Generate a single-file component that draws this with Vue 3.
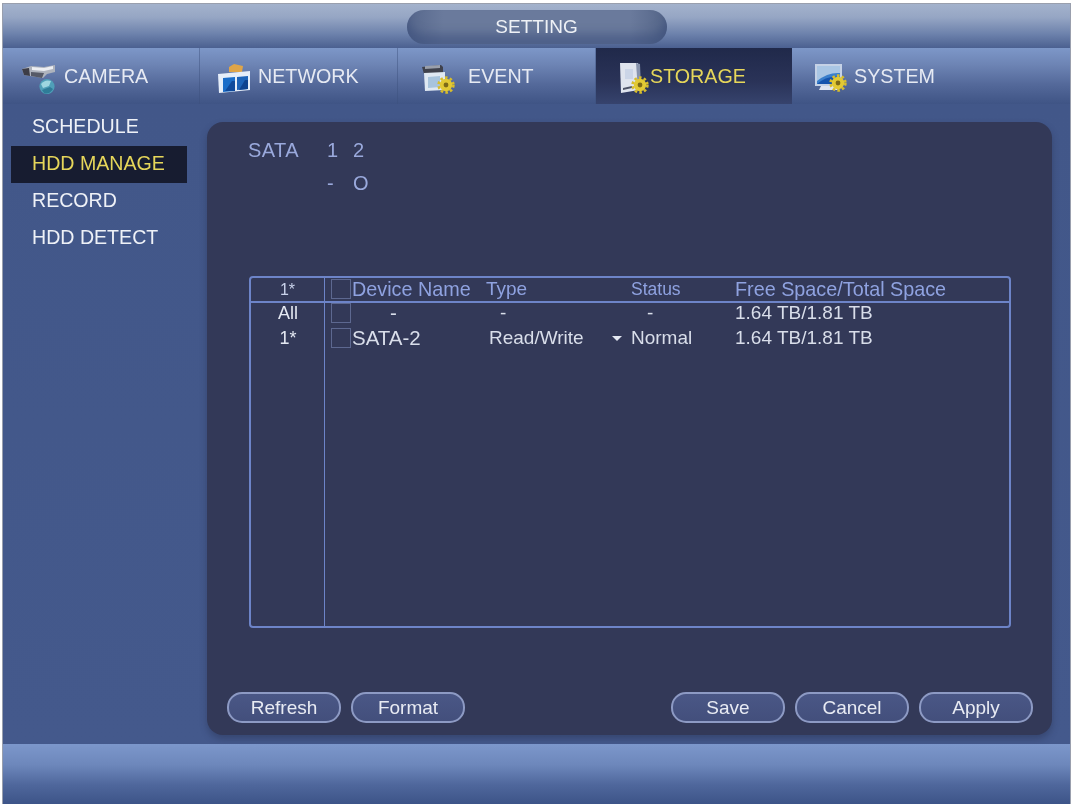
<template>
  <div class="frame">
    <header class="titlebar">
      <div class="title-pill">SETTING</div>
    </header>

    <nav class="tabs">
      <div
        v-for="tab in tabs"
        :key="tab.name"
        class="tab"
        :class="[tab.cls, { active: tab.name === 'STORAGE' }]"
      >
        <svg class="tab-icon" viewBox="0 0 36 36" v-html="tab.icon"></svg>
        <span>{{ tab.name }}</span>
      </div>
    </nav>

    <div class="body">
      <aside class="sidebar">
        <div
          v-for="item in menu"
          :key="item"
          class="menu-item"
          :class="{ current: item === 'HDD MANAGE' }"
        >{{ item }}</div>
      </aside>

      <main class="panel">
        <div class="sata">
          <div class="sata-row">
            <span class="sata-label">SATA</span>
            <span class="sata-port">1</span>
            <span class="sata-port">2</span>
          </div>
          <div class="sata-row second">
            <span class="sata-label"></span>
            <span class="sata-port">-</span>
            <span class="sata-port">O</span>
          </div>
        </div>

        <div class="table">
          <div class="table-head">
            <div class="col-num">1*</div>
            <div class="col-check"><i class="box"></i></div>
            <div class="col-name">Device Name</div>
            <div class="col-type">Type</div>
            <div class="col-status">Status</div>
            <div class="col-space">Free Space/Total Space</div>
          </div>
          <div class="table-body">
            <div v-for="row in rows" :key="row.num" class="table-row">
              <div class="col-num">{{ row.num }}</div>
              <div class="col-check"><i class="box"></i></div>
              <div class="col-name" :class="{ dash: row.name === '-' }">{{ row.name }}</div>
              <div class="col-type" :class="{ dash: row.type === '-' }">{{ row.type }}</div>
              <div class="col-arrow"><i v-if="row.arrow" class="arrow"></i></div>
              <div class="col-status" :class="{ dash: row.status === '-' }">{{ row.status }}</div>
              <div class="col-space">{{ row.space }}</div>
            </div>
          </div>
        </div>

        <div class="buttons">
          <button class="btn">Refresh</button>
          <button class="btn">Format</button>
          <span class="spacer"></span>
          <button class="btn">Save</button>
          <button class="btn">Cancel</button>
          <button class="btn">Apply</button>
        </div>
      </main>
    </div>

    <footer class="bottombar"></footer>
  </div>
</template>

<script setup>
const gear = (x, y) => `
  <g transform="translate(${x} ${y})">
    <circle r="7.4" fill="none" stroke="#d8bd2c" stroke-width="2.6" stroke-dasharray="2.6 2.2"/>
    <circle r="6.2" fill="#e2c934"/>
    <circle r="2.4" fill="#7d6a18"/>
  </g>`

const cameraIcon = `
  <path d="M2 11 L11 8 L24 9 L35 7 L35 14 L27 16 L23 20 L10 18 L4 17 Z" fill="#aeb3bd"/>
  <path d="M2 11 L9 10 L10 18 L4 17 Z" fill="#3d3d47"/>
  <path d="M12 9 L24 10 L33 8 L33 11 L24 13 L12 12 Z" fill="#eceef2"/>
  <path d="M11 14 L24 15 L22 20 L11 18 Z" fill="#565a67"/>
  <circle cx="27" cy="28.5" r="7.6" fill="#4f9fb8"/>
  <path d="M21 26 Q25 21 31 23 L29 28 L23 30 Z" fill="#9ed6e0"/>
  <path d="M22 32 L30 29 L33 31 Q29 37 24 35 Z" fill="#2f7c98"/>`

const networkIcon = `
  <path d="M11 9 L16 6 L25 8 L24 14 L11 14 Z" fill="#dfa548"/>
  <path d="M0 16 L32 13 L32 32 L1 35 Z" fill="#e6eef9"/>
  <path d="M5 20 L17 19 L17 33 L5 34 Z" fill="#1b6dc8"/>
  <path d="M19 19 L30 18 L30 31 L19 32 Z" fill="#1d63b8"/>
  <path d="M7 33 L14 23 L17 23 L17 33 Z" fill="#0f4a9c"/>
  <path d="M21 32 L27 22 L30 22 L30 31 Z" fill="#0e4390"/>`

const eventIcon = `
  <path d="M2 9 L21 7 L23 9 L23 15 L4 16 Z" fill="#3f414c"/>
  <path d="M5 8 L20 7 L20 10 L5 11 Z" fill="#9a9fab"/>
  <path d="M4 15 L25 14 L25 32 L5 33 Z" fill="#dfe8f2"/>
  <path d="M8 19 L20 18 L20 29 L8 30 Z" fill="#a8c4dd"/>
  ${gear(26, 27)}`

const storageIcon = `
  <path d="M2 5 L20 5 L21 32 L3 35 Z" fill="#dfe4ee"/>
  <path d="M18 5 L22 6 L23 30 L20 32 Z" fill="#8793ad"/>
  <rect x="7" y="11" width="8" height="10" fill="#cbd5e7"/>
  <path d="M5 30 L14 28 L14 30 L5 32 Z" fill="#4d5366"/>
  ${gear(22, 27)}`

const systemIcon = `
  <rect x="1" y="6" width="27" height="22" fill="#c5d2e6"/>
  <rect x="3" y="8" width="23" height="18" fill="#3a7fcb"/>
  <path d="M3 8 H26 V15 Q14 14 3 23 Z" fill="#a9c6e4"/>
  <path d="M3 26 Q13 17 26 19 V26 Z" fill="#1554ad"/>
  <path d="M7 28 H21 L24 32 H5 Z" fill="#dfe6f1"/>
  ${gear(24, 25)}`

const tabs = [
  { name: 'CAMERA', cls: 't-camera', icon: cameraIcon },
  { name: 'NETWORK', cls: 't-network', icon: networkIcon },
  { name: 'EVENT', cls: 't-event', icon: eventIcon },
  { name: 'STORAGE', cls: 't-storage', icon: storageIcon },
  { name: 'SYSTEM', cls: 't-system', icon: systemIcon }
]

const menu = ['SCHEDULE', 'HDD MANAGE', 'RECORD', 'HDD DETECT']

const rows = [
  { num: 'All', name: '-', type: '-', status: '-', space: '1.64 TB/1.81 TB' },
  { num: '1*', name: 'SATA-2', type: 'Read/Write', arrow: true, status: 'Normal', space: '1.64 TB/1.81 TB' }
]
</script>

<style scoped>
.frame {
  width: 1067px;
  height: 800px;
  margin: 4px 0 0 3px;
  display: flex;
  flex-direction: column;
  font-family: "Liberation Sans", Arial, sans-serif;
  color: #e4e8f2;
  filter: blur(0.7px);
  box-shadow: 0 0 0 1px rgba(70, 80, 105, 0.55);
}

.titlebar {
  height: 44px;
  flex: none;
  display: flex;
  justify-content: center;
  align-items: center;
  background: linear-gradient(#a3b2cc 0%, #96a6c4 30%, #6d82ac 68%, #4b6090 100%);
}

.title-pill {
  width: 260px;
  height: 34px;
  margin-top: 1px;
  border-radius: 17px;
  background: linear-gradient(90deg, #56678c 0%, #6a7a9c 14%, #6a7a9c 86%, #546588 100%);
  box-shadow: inset 0 -10px 10px rgba(52, 72, 120, 0.5);
  color: #eef1f6;
  font-size: 19px;
  line-height: 34px;
  text-align: center;
}

.tabs {
  height: 56px;
  flex: none;
  display: flex;
  background: linear-gradient(#7d97c8 0%, #6d84b4 30%, #54699a 65%, #3f5485 100%);
}

.tab {
  height: 100%;
  display: flex;
  align-items: center;
  font-size: 19.7px;
  color: #e6eaf3;
  box-sizing: border-box;
  border-right: 1px solid rgba(60, 80, 125, 0.45);
}

.tab-icon {
  flex: none;
  width: 36px;
  height: 36px;
}

.t-camera { width: 197px; padding-left: 17px; gap: 8px; }
.t-network { width: 198px; padding-left: 18px; gap: 4px; }
.t-event { width: 198px; padding-left: 22px; gap: 12px; }
.t-storage { width: 196px; padding-left: 22px; gap: 0; }
.t-storage span { margin-left: -4px; }
.t-system { width: 278px; padding-left: 22px; gap: 4px; border-right: none; }

.tab.active {
  background: linear-gradient(#20294a 0%, #2a3358 60%, #36436d 100%);
  color: #e6d65a;
  border-right: none;
}

.body {
  flex: 1;
  min-height: 0;
  display: flex;
  background: linear-gradient(#425789 0%, #44598c 100%);
}

.sidebar {
  width: 204px;
  flex: none;
  box-sizing: border-box;
  padding: 5px 0 0 8px;
}

.menu-item {
  width: 176px;
  height: 37px;
  line-height: 35px;
  padding-left: 21px;
  box-sizing: border-box;
  font-size: 19.6px;
  color: #eef1f7;
}

.menu-item.current {
  background: #171c30;
  color: #e6d65a;
}

.panel {
  flex: none;
  width: 845px;
  margin: 18px 0 9px;
  box-sizing: border-box;
  padding: 16px 19px 12px 20px;
  display: flex;
  flex-direction: column;
  border-radius: 16px;
  background: #333958;
  box-shadow: 0 4px 7px rgba(35, 42, 72, 0.4);
}

.sata {
  height: 138px;
  padding-left: 21px;
  box-sizing: border-box;
  color: #9aa9dc;
  font-size: 20px;
}

.sata-row {
  display: flex;
  height: 24px;
  line-height: 24px;
}

.sata-row.second {
  margin-top: 9px;
}

.sata-label {
  width: 79px;
  letter-spacing: 0.4px;
}

.sata-port {
  width: 26px;
}

.table {
  width: 762px;
  height: 353px;
  margin-left: 22px;
  box-sizing: border-box;
  border: 2px solid #6d84c8;
  border-radius: 4px;
  display: flex;
  flex-direction: column;
  font-size: 19px;
}

.table-head {
  height: 25px;
  box-sizing: border-box;
  flex: none;
  display: flex;
  align-items: center;
  color: #8fa2e0;
  border-bottom: 2px solid #6d84c8;
}

.table-body {
  flex: 1;
  position: relative;
  display: flex;
  flex-direction: column;
}

.table-body::before {
  content: "";
  position: absolute;
  left: 73px;
  top: 0;
  bottom: 0;
  border-left: 1px solid #6d84c8;
}

.table-row {
  display: flex;
  align-items: center;
  height: 25px;
  box-sizing: border-box;
  padding-bottom: 4px;
  color: #d9deea;
}

.col-num {
  width: 74px;
  flex: none;
  text-align: center;
  color: #e4e8f2;
  font-size: 18px;
}

.table-head .col-num {
  align-self: stretch;
  line-height: 23px;
  box-sizing: border-box;
  border-right: 1px solid #6d84c8;
  font-size: 16px;
  color: #c9d2ea;
}

.col-check {
  width: 27px;
  flex: none;
  padding-left: 6px;
  box-sizing: border-box;
  display: flex;
}

.box {
  width: 20px;
  height: 20px;
  box-sizing: border-box;
  border: 1px solid #5d6890;
}

.col-name {
  flex: none;
  width: 134px;
  font-size: 19.8px;
  white-space: nowrap;
}

.table-row .col-name {
  width: 137px;
  font-size: 20.5px;
}

.col-type {
  flex: none;
  width: 145px;
}

.table-row .col-type {
  width: 123px;
}

.col-arrow {
  width: 19px;
  flex: none;
}

.arrow {
  display: block;
  width: 0;
  height: 0;
  border: 5px solid transparent;
  border-top: 5px solid #e4e8f2;
  border-bottom: 0;
}

.col-status {
  flex: none;
  width: 104px;
}

.table-head .col-status {
  font-size: 17.5px;
}

.col-space {
  flex: none;
  white-space: nowrap;
}

.table-head .col-space {
  font-size: 19.8px;
}

.table-row .col-name.dash {
  padding-left: 38px;
  box-sizing: border-box;
}

.table-row .col-type.dash {
  padding-left: 11px;
  box-sizing: border-box;
}

.table-row .col-status.dash {
  padding-left: 16px;
  box-sizing: border-box;
}

.buttons {
  display: flex;
  margin-top: 64px;
  gap: 10px;
}

.spacer {
  flex: 1;
}

.btn {
  width: 114px;
  height: 31px;
  padding: 0;
  border: 2px solid #8d9ac4;
  border-radius: 15px;
  background: linear-gradient(#4a5786, #434f7c);
  color: #e8ebf3;
  font-family: inherit;
  font-size: 19px;
}

.bottombar {
  flex: none;
  height: 60px;
  background: linear-gradient(#7c97cb 0%, #6d87bb 35%, #4f679c 68%, #3d5488 100%);
}
</style>

<style>
html,
body {
  background: #ffffff;
}
</style>
